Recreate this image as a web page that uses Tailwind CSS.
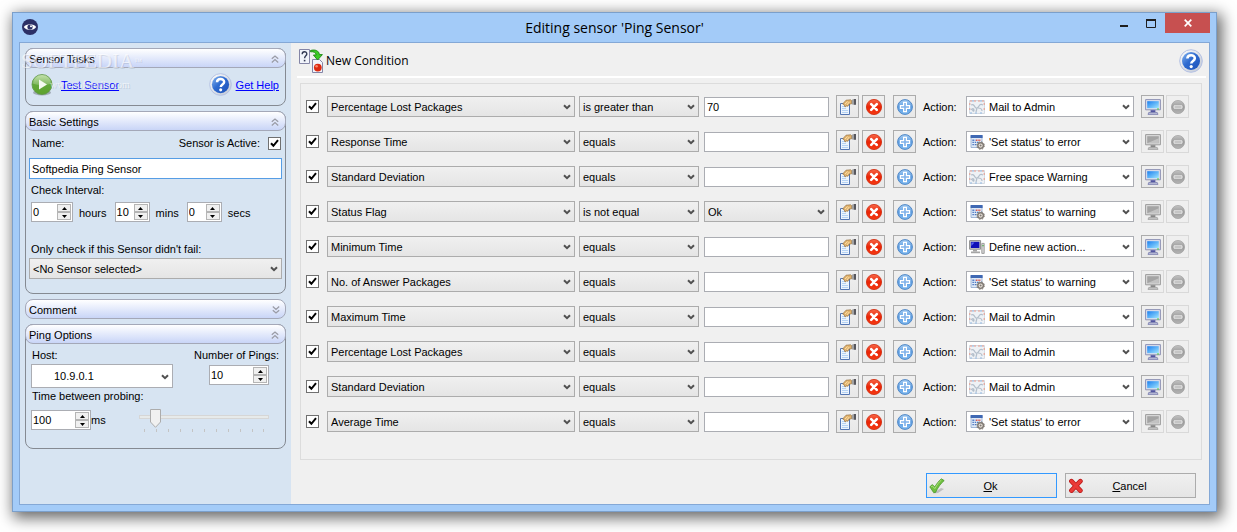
<!DOCTYPE html>
<html lang="en">
<head>
    <meta charset="UTF-8">
    <meta name="viewport" content="width=device-width, initial-scale=1.0">
    <title>Editing sensor 'Ping Sensor'</title>

    <script src="https://cdn.jsdelivr.net/npm/@tailwindcss/browser@4"></script>
</head>
<body class="flex min-h-screen bg-white pt-3 pr-5 pb-5 pl-3 font-['Liberation_Sans',Arial,sans-serif] text-[11px] leading-[14px] text-black">

    <!-- Icon sprite -->
    <svg class="absolute size-0" aria-hidden="true">
        <defs>
            <linearGradient id="gGreen" x1="0" y1="0" x2="0" y2="1"><stop offset="0" stop-color="#b9dd9b"/><stop offset=".5" stop-color="#62a83a"/><stop offset="1" stop-color="#5da22c"/></linearGradient>
            <linearGradient id="gBlue" x1="0" y1="0" x2="1" y2="1"><stop offset="0" stop-color="#8ab8f0"/><stop offset=".45" stop-color="#2f6bd0"/><stop offset="1" stop-color="#1c50b8"/></linearGradient>
            <linearGradient id="gAdd" x1="0" y1="0" x2="0" y2="1"><stop offset="0" stop-color="#a5cdf3"/><stop offset=".5" stop-color="#5f9fe4"/><stop offset="1" stop-color="#7cb8f0"/></linearGradient>
            <linearGradient id="gRed" x1="0" y1="0" x2="0" y2="1"><stop offset="0" stop-color="#f8694a"/><stop offset=".5" stop-color="#ea2405"/><stop offset="1" stop-color="#f53a14"/></linearGradient>
            <linearGradient id="gScreen" x1="0" y1="0" x2="1" y2="1"><stop offset="0" stop-color="#1c7ff0"/><stop offset="1" stop-color="#9fe6ff"/></linearGradient>
            <linearGradient id="gRing" x1="0" y1="0" x2="1" y2="1"><stop offset="0" stop-color="#ffffff"/><stop offset="1" stop-color="#bfc6d2"/></linearGradient>
            <linearGradient id="gMinus" x1="0" y1="0" x2="0" y2="1"><stop offset="0" stop-color="#c2c2c2"/><stop offset=".5" stop-color="#9b9b9b"/><stop offset="1" stop-color="#b4b4b4"/></linearGradient>
        </defs>

        <symbol id="check" viewBox="0 0 9 9"><path d="M1 4.2l2.4 2.6L8 1.2" fill="none" stroke="#000" stroke-width="2"/></symbol>
        <symbol id="arrow" viewBox="0 0 8 6"><path d="M1 1.2l3 3 3-3" fill="none" stroke="#505050" stroke-width="2"/></symbol>
        <symbol id="collapse" viewBox="0 0 8 8"><path d="M.8 3.8L4 1l3.2 2.8M.8 7.4L4 4.6l3.2 2.8" fill="none" stroke="#9a9ca6" stroke-width="1.3"/></symbol>

        <symbol id="eye" viewBox="0 0 16 16">
            <circle cx="8" cy="8" r="8" fill="#2b2f66"/>
            <path d="M1.8 8C4 4.2 12 4.2 14.2 8 12 11.8 4 11.8 1.8 8z" fill="#fff"/>
            <circle cx="8" cy="8" r="2.6" fill="#2b2f66"/><circle cx="9" cy="7.2" r="1" fill="#fff"/>
        </symbol>
        <symbol id="play" viewBox="0 0 22 22">
            <ellipse cx="11" cy="18.5" rx="9" ry="3" fill="#000" opacity=".25"/>
            <circle cx="11" cy="10.5" r="10" fill="url(#gGreen)" stroke="#5d9545" stroke-width=".8"/>
            <path d="M2 9.5a9 8.5 0 0 1 18 0c-5 2-13 2-18 0z" fill="#fff" opacity=".2"/>
            <path d="M8 5.5v10l8-5z" fill="#f4faf0"/>
        </symbol>
        <symbol id="help" viewBox="0 0 24 24">
            <circle cx="12" cy="12" r="11.3" fill="url(#gRing)" stroke="#b3c0e4" stroke-width="1"/>
            <circle cx="12" cy="12" r="9" fill="url(#gBlue)"/>
            <path d="M8.4 9.6C8.4 5.2 15.8 5.2 15.8 9.3c0 2.7-3.5 2.6-3.5 5.2" fill="none" stroke="#fff" stroke-width="2.6"/>
            <circle cx="12.2" cy="17.6" r="1.6" fill="#fff"/>
        </symbol>
        <symbol id="newcond" viewBox="0 0 24 24">
            <path d="M.5.5h10v14H.5z" fill="#f1f4fb" stroke="#8485a6"/>
            <path d="M3.200 5.200c0-3.200 4.600-3.200 4.600-.2 0 1.800-2.200 2-2.200 4.200" fill="none" stroke="#333b55" stroke-width="1.4"/>
            <path d="M4.800 10.800h1.600v1.600H4.800z" fill="#333b55"/>
            <path d="M13.500 10.500h7l3 3v10h-10z" fill="#f1f4fb" stroke="#8485a6"/>
            <circle cx="18.800" cy="18.600" r="3.900" fill="#dd2a10"/><circle cx="17.600" cy="17.200" r="1.300" fill="#f88a6c"/>
            <path d="M11.500 1.500C16 .2 20 1.600 20.400 5.600h3L18.600 11l-4.200-5h2.800c-.4-2.400-2.400-3.600-5.700-3.200z" fill="#3ccb25" stroke="#1c8511" stroke-width=".9"/>
        </symbol>
        <symbol id="props" viewBox="0 0 16 16">
            <path d="M.5 4.500h9v11H.5z" fill="#eef5fd" stroke="#5577b4"/>
            <path d="M2 7.500h3M2 9.500h4M2 11.500h6M2 13.500h6" stroke="#b4d2f4"/>
            <path d="M2.600 5L6 1.200 10.600.8l1 .8v3.200l-2.600.4-1 2-1.600-.2-1.400 1-.8-2.200z" fill="#e2b26c" stroke="#8a6534" stroke-width=".6"/>
            <path d="M5 5l2.600-2.400M7 6l2.200-3" stroke="#f9e2b0" stroke-width=".9"/>
            <path d="M12 .6h1.400v4.800H12z" fill="#a2a2a2"/><path d="M13.600 0H16v5.800h-2.400z" fill="#58585e"/>
        </symbol>
        <symbol id="delete" viewBox="0 0 16 16">
            <circle cx="8" cy="8" r="7.600" fill="url(#gRed)" stroke="#cf2609" stroke-width=".8"/>
            <path d="M5.200 5.200l5.600 5.600M10.800 5.200l-5.600 5.600" stroke="#fff" stroke-width="2.600" stroke-linecap="round"/>
        </symbol>
        <symbol id="add" viewBox="0 0 16 16">
            <circle cx="8" cy="8" r="7.400" fill="url(#gAdd)" stroke="#5288c6" stroke-width="1"/>
            <path d="M6.600 3.400h2.800v3.200h3.200v2.800H9.400v3.200H6.600V9.400H3.400V6.600h3.200z" fill="#7fb2ea" stroke="#fff" stroke-width="1.200"/>
        </symbol>
        <symbol id="monitor" viewBox="0 0 16 16">
            <path d="M.6.6h14.800v10.200H.6z" fill="#dfe2ee" stroke="#8e92b4"/>
            <path d="M2.200 2.200h11.600v7H2.200z" fill="url(#gScreen)"/>
            <path d="M12 9.400h2v1h-2z" fill="#4fcf3c"/>
            <path d="M5.600 11.200h4.800v2.200H5.600z" fill="#5054a0"/>
            <path d="M3.800 13.400h8.400l.8 2H3z" fill="#b9bcd8" stroke="#6c70a8" stroke-width=".7"/>
        </symbol>
        <symbol id="monitor-off" viewBox="0 0 16 16">
            <path d="M.6.6h14.800v10.200H.6z" fill="#dcdcdc" stroke="#9c9c9c"/>
            <path d="M2.200 2.200h11.600v7H2.200z" fill="#a4a4a4"/><path d="M2.200 9.200l11.600-5v5z" fill="#c2c2c2"/>
            <path d="M5.600 11.200h4.800v2.200H5.600z" fill="#858585"/>
            <path d="M3.800 13.400h8.400l.8 2H3z" fill="#c4c4c4" stroke="#989898" stroke-width=".7"/>
        </symbol>
        <symbol id="minus" viewBox="0 0 14 14">
            <circle cx="7" cy="7" r="6.600" fill="url(#gMinus)" stroke="#a0a0a0" stroke-width=".7"/>
            <path d="M3 5.800h8v2.400H3z" fill="#b5b5b5" stroke="#e9e9e9"/>
        </symbol>
        <symbol id="mail" viewBox="0 0 16 16">
            <path d="M.5 1.500h15v13H.5z" fill="#eef1f5" stroke="#d4dae2"/>
            <path d="M1 2h14" stroke="#e79a8c" stroke-dasharray="2 2"/><path d="M3 2h12" stroke="#93b9e2" stroke-dasharray="2 6"/>
            <path d="M1 14h14" stroke="#93b9e2" stroke-dasharray="2 3"/><path d="M.8 4v9M15.200 4v9" stroke="#e79a8c" stroke-dasharray="2 3"/>
            <path d="M2 6c2-1 3 0 4 2s3 1 4-1 2-2 4-1M2 11c1-2 3-2 3 0s-2 1-1-1M8 9l-1 4M9 9c2 0 4 1 4 3" fill="none" stroke="#b4bfcb" stroke-width="1.200"/>
        </symbol>
        <symbol id="calendar" viewBox="0 0 16 16">
            <path d="M2 1.500h11v12H2z" fill="#dfe9f7" stroke="#8ea6cd" stroke-width=".8"/>
            <path d="M1.600 1h12v3h-12z" fill="#3f68b4"/>
            <path d="M3.400 6.200h3M3.400 8.400h6M3.400 10.600h5" stroke="#4d79c1" stroke-width="1.400" stroke-dasharray="1.500 .8"/>
            <path d="M7 6.200h5" stroke="#df5a4c" stroke-width="1.400" stroke-dasharray="1.500 .8"/>
            <circle cx="11.600" cy="11.600" r="2.800" fill="#e8e2da" stroke="#807a74" stroke-width="1.400"/>
            <circle cx="11.600" cy="11.600" r="3.800" fill="none" stroke="#807a74" stroke-width="1" stroke-dasharray="1.500 1.500"/>
            <circle cx="11.600" cy="11.600" r="1" fill="#807a74"/>
        </symbol>
        <symbol id="computer" viewBox="0 0 16 16">
            <path d="M.6 1.600h11v8.600H.6z" fill="#cfcfcf" stroke="#8c8c8c"/>
            <path d="M1.800 2.800h8.600v6.200H1.800z" fill="#1010b8"/><path d="M2.400 3.400h3L2.400 7z" fill="#5a6bf0"/>
            <path d="M4 10.600h4v1.600H4zM2 12.400h9v1.800H2z" fill="#a5a5a5"/>
            <path d="M12.800 4.400h2.400v10h-2.400z" fill="#d8d8d8" stroke="#8c8c8c" stroke-width=".8"/><path d="M13.400 6h1.200v1.200h-1.200z" fill="#3cab3c"/>
        </symbol>
        <symbol id="ok" viewBox="0 0 16 16">
            <path d="M4 15.400l5-.4 6-4-3-1z" fill="#000" opacity=".18"/>
            <path d="M.8 8.800l2.600-2.200 2.400 2.400C7.600 5.800 9.800 2.800 12.400.8l2.800 1.800C11.600 5.600 8.800 9.600 6.600 14.400l-2 .2z" fill="#6fbf3f" stroke="#3f8f1f" stroke-width=".7"/>
            <path d="M2.200 8.800l1.200-.8 2.400 2.600C8 6.600 10 4 12.400 2" fill="none" stroke="#a9e07c" stroke-width="1"/>
        </symbol>
        <symbol id="cross" viewBox="0 0 16 16">
            <path d="M3 15h10l1.500-2H2z" fill="#000" opacity=".15"/>
            <path d="M3.400 3.200l9 9.400M12.400 3.200l-9 9.400" stroke="#b81414" stroke-width="4.600" stroke-linecap="round"/>
            <path d="M3.400 3.200l9 9.400M12.400 3.200l-9 9.400" stroke="#ea3a36" stroke-width="3.200" stroke-linecap="round"/>
        </symbol>
    </svg>

    <div class="flex flex-1 flex-col border border-[#7b9fca] bg-[#a3cbf8] px-[6px] pb-[6px] shadow-[3px_4px_14px_2px_rgba(0,0,0,0.6)]">

        <!-- Title bar -->
        <header class="grid h-[29px] grid-cols-[1fr_auto_1fr]">
            <svg class="mt-[6px] ml-[3px] size-4"><use href="#eye"/></svg>
            <h1 class="pt-[5px] font-['Open_Sans',sans-serif] text-[14px] leading-5">Editing sensor 'Ping Sensor'</h1>
            <div class="flex h-5 justify-end">
                <button aria-label="Minimize" class="grid w-[26px] place-items-center">
                    <svg class="h-[9px] w-[10px]"><path d="M1 6h8v2H1z" fill="#1e1e1e"/></svg>
                </button>
                <button aria-label="Maximize" class="grid w-[28px] place-items-center">
                    <svg class="h-[9px] w-[10px]"><path d="M.5 1h9v7.500h-9z" fill="none" stroke="#1e1e1e"/><path d="M0 0h10v2H0z" fill="#1e1e1e"/></svg>
                </button>
                <button aria-label="Close" class="grid w-[45px] place-items-center bg-[#c75050]">
                    <svg class="size-2"><path d="M.7.7l6.600 6.600M7.300.7L.7 7.300" stroke="#fff" stroke-width="1.700"/></svg>
                </button>
            </div>
        </header>

        <div class="flex flex-1 border border-[#84a8d6] bg-[#f0f0f0]">

            <!-- Sidebar -->
            <aside class="relative flex w-[271px] shrink-0 flex-col gap-[5px] bg-[#d7e4f2] px-[5px] pt-[5px]">
                <section class="h-[58px] rounded-lg border border-[#858a92]">
                    <h2 class="-mx-px -mt-px flex h-5 items-center justify-between rounded-lg border border-[#a4a8b8] bg-linear-to-b from-white to-[#c9d5f7] pt-px pr-[6px] pl-[3px]">Sensor Tasks
                        <button aria-label="Collapse"><svg class="size-2"><use href="#collapse"/></svg></button>
                    </h2>
                    <div class="flex items-center pt-[5px] pr-[6px] pl-[5px]">
                        <svg class="size-[22px]"><use href="#play"/></svg>
                        <a href="#" class="ml-2 text-[#0000ff] underline">Test Sensor</a>
                        <svg class="mr-1 ml-auto size-[23px]"><use href="#help"/></svg>
                        <a href="#" class="text-[#0000ff] underline">Get Help</a>
                    </div>
                </section>

                <section class="h-[183px] rounded-lg border border-[#858a92]">
                    <h2 class="-mx-px -mt-px flex h-5 items-center justify-between rounded-lg border border-[#a4a8b8] bg-linear-to-b from-white to-[#c9d5f7] pt-px pr-[6px] pl-[3px]">Basic Settings
                        <button aria-label="Collapse"><svg class="size-2"><use href="#collapse"/></svg></button>
                    </h2>
                    <div class="px-[3px] pt-[5px]">
                        <div class="flex items-center px-[3px] pr-px">
                            <label for="sensorName">Name:</label>
                            <label for="sensorActive" class="mr-2 ml-auto">Sensor is Active:</label>
                            <span class="grid size-[13px] place-items-center border border-[#707070] bg-white">
                                <input id="sensorActive" type="checkbox" checked class="peer col-start-1 row-start-1 size-[11px] appearance-none">
                                <svg class="pointer-events-none col-start-1 row-start-1 hidden size-[9px] peer-checked:block"><use href="#check"/></svg>
                            </span>
                        </div>
                        <input id="sensorName" type="text" value="Softpedia Ping Sensor" class="mt-2 block h-[21px] w-full border border-[#569de5] bg-white px-[2px]">
                        <p class="mt-1 pl-[2px]">Check Interval:</p>
                        <div class="mt-[5px] flex items-center pl-[2px]">
                            <span class="flex h-5 w-[42px] items-center border border-[#abadb3] bg-white pr-px">
                                <input id="hours" type="text" value="0" class="w-0 flex-1 pl-px">
                                <span class="spin"></span>
                            </span>
                            <label for="hours" class="mr-2 ml-[6px] pt-[2px]">hours</label>
                            <span class="flex h-5 w-[35px] items-center border border-[#abadb3] bg-white pr-px">
                                <input id="mins" type="text" value="10" class="w-0 flex-1 pl-px">
                                <span class="spin"></span>
                            </span>
                            <label for="mins" class="mr-2 ml-[6px] pt-[2px]">mins</label>
                            <span class="flex h-5 w-[35px] items-center border border-[#abadb3] bg-white pr-px">
                                <input id="secs" type="text" value="0" class="w-0 flex-1 pl-px">
                                <span class="spin"></span>
                            </span>
                            <label for="secs" class="ml-[6px] pt-[2px]">secs</label>
                        </div>
                        <label for="depends" class="mt-5 block pl-[2px]">Only check if this Sensor didn't fail:</label>
                        <div class="relative mt-[2px]">
                            <select id="depends" class="block h-[21px] w-full appearance-none border border-[#acacac] bg-linear-to-b from-[#f0f0f0] to-[#e5e5e5] pl-[3px]"><option>&lt;No Sensor selected&gt;</option></select>
                            <svg class="pointer-events-none absolute top-2 right-1 h-[6px] w-2"><use href="#arrow"/></svg>
                        </div>
                    </div>
                </section>

                <section>
                    <h2 class="flex h-5 items-center justify-between rounded-lg border border-[#a4a8b8] bg-linear-to-b from-white to-[#c9d5f7] pt-px pr-[5px] pl-[3px]">Comment
                        <button aria-label="Expand"><svg class="size-2 rotate-180"><use href="#collapse"/></svg></button>
                    </h2>
                </section>

                <section class="h-[125px] rounded-lg border border-[#858a92]">
                    <h2 class="-mx-px -mt-px flex h-5 items-center justify-between rounded-lg border border-[#a4a8b8] bg-linear-to-b from-white to-[#c9d5f7] pt-px pr-[6px] pl-[3px]">Ping Options
                        <button aria-label="Collapse"><svg class="size-2"><use href="#collapse"/></svg></button>
                    </h2>
                    <div class="px-[5px] pt-1">
                        <div class="flex justify-between px-px">
                            <label for="host">Host:</label>
                            <label for="pings">Number of Pings:</label>
                        </div>
                        <div class="mt-[2px] flex items-start justify-between pr-[11px]">
                            <span class="relative">
                                <select id="host" class="block h-6 w-[142px] appearance-none border border-[#abadb3] bg-white pl-[22px]"><option>10.9.0.1</option></select>
                                <svg class="pointer-events-none absolute top-[10px] right-1 h-[6px] w-2"><use href="#arrow"/></svg>
                            </span>
                            <span class="mt-px flex h-5 w-[60px] items-center border border-[#abadb3] bg-white pr-px">
                                <input id="pings" type="text" value="10" class="w-0 flex-1 pl-px">
                                <span class="spin"></span>
                            </span>
                        </div>
                        <label for="probing" class="mt-px block pl-px">Time between probing:</label>
                        <div class="mt-[7px] flex items-start pr-[11px]">
                            <span class="flex h-5 w-[60px] items-center border border-[#abadb3] bg-white pr-px">
                                <input id="probing" type="text" value="100" class="w-0 flex-1 pl-px">
                                <span class="spin"></span>
                            </span>
                            <span class="pt-[3px]">ms</span>
                            <div class="relative ml-auto w-[130px]">
                                <input type="range" min="0" max="1000" value="100" aria-label="Time between probing" class="mt-[5px] block h-1 w-full appearance-none border border-[#d6d6d6] bg-[#e7eaea] [&::-webkit-slider-thumb]:h-5 [&::-webkit-slider-thumb]:w-3 [&::-webkit-slider-thumb]:appearance-none [&::-webkit-slider-thumb]:opacity-0">
                                <svg class="pointer-events-none absolute -top-px left-[11px] h-[19px] w-[11px]"><path d="M.5.5h10v12.500L5.500 18.300.5 13z" fill="#f0f0f0" stroke="#acacac"/></svg>
                                <svg class="mt-[10px] h-[3px] w-full"><path d="M5.500 0v3M17.500 0v3M29.500 0v3M41.500 0v3M53.500 0v3M65.500 0v3M77.500 0v3M89.500 0v3M101.500 0v3M113.500 0v3M124.500 0v3" stroke="#c4c4c4"/></svg>
                            </div>
                        </div>
                    </div>
                </section>

                <!-- Watermark -->
                <div aria-hidden="true" class="pointer-events-none absolute top-[6px] left-px font-['Liberation_Serif',serif] text-white/60 [text-shadow:1px_1px_0_rgba(130,140,160,0.25)]">
                    <p class="text-[21px] leading-6">SOFTPEDIA<sup class="text-[8px]">™</sup></p>
                    <p class="pt-[5px] pl-[29px] text-[10px]">www.softpedia.com</p>
                </div>
            </aside>

            <!-- Conditions -->
            <main class="flex min-w-0 flex-1 flex-col">
                <div class="mr-[3px] ml-[6px] flex h-[35px] items-center justify-between border-b-2 border-white pt-[3px] pr-[3px] pl-[2px]">
                    <button class="flex items-center gap-[3px] font-['Open_Sans',sans-serif] text-[12px]">
                        <svg class="size-6"><use href="#newcond"/></svg>New Condition
                    </button>
                    <button aria-label="Help"><svg class="size-6"><use href="#help"/></svg></button>
                </div>

                <div id="conditions" class="mt-[5px] mr-[7px] ml-[9px] flex flex-1 flex-col gap-3 border border-[#dcdcdc] pt-[11px] pr-3 pl-[5px]"></div>

                <footer class="flex justify-end gap-2 pt-[13px] pr-[13px] pb-[6px]">
                    <button class="flex h-[25px] w-[131px] items-center border border-[#3399ff] bg-linear-to-b from-[#f0f0f0] to-[#e5e5e5] px-[2px]">
                        <svg class="size-4"><use href="#ok"/></svg><span class="flex-1 pr-[18px]"><u>O</u>k</span>
                    </button>
                    <button class="flex h-[25px] w-[131px] items-center border border-[#acacac] bg-linear-to-b from-[#f0f0f0] to-[#e5e5e5] px-[2px]">
                        <svg class="size-4"><use href="#cross"/></svg><span class="flex-1 pr-[18px]"><u>C</u>ancel</span>
                    </button>
                </footer>
            </main>
        </div>
    </div>

    <script>
        // [value, operator, operand, action icon, action]
        const conditions = [
            ['Percentage Lost Packages', 'is greater than', '70', 'mail', 'Mail to Admin'],
            ['Response Time', 'equals', '', 'calendar', "'Set status' to error"],
            ['Standard Deviation', 'equals', '', 'mail', 'Free space Warning'],
            ['Status Flag', 'is not equal', 'Ok', 'calendar', "'Set status' to warning"],
            ['Minimum Time', 'equals', '', 'computer', 'Define new action...'],
            ['No. of Answer Packages', 'equals', '', 'calendar', "'Set status' to warning"],
            ['Maximum Time', 'equals', '', 'mail', 'Mail to Admin'],
            ['Percentage Lost Packages', 'equals', '', 'mail', 'Mail to Admin'],
            ['Standard Deviation', 'equals', '', 'mail', 'Mail to Admin'],
            ['Average Time', 'equals', '', 'calendar', "'Set status' to error"],
        ];

        function createSelect(text, label) {
            return `
                <select aria-label="${label}" class="block h-[21px] w-full appearance-none border border-[#acacac] bg-linear-to-b from-[#f0f0f0] to-[#e5e5e5] pl-[3px]"><option>${text}</option></select>
                <svg class="pointer-events-none absolute top-2 right-1 h-[6px] w-2"><use href="#arrow"/></svg>`;
        }

        function createButton(icon, label) {
            return `<button aria-label="${label}" class="grid size-[23px] shrink-0 place-items-center border border-[#acacac] bg-linear-to-b from-[#f0f0f0] to-[#e8e8e8]"><svg class="size-4"><use href="#${icon}"/></svg></button>`;
        }

        function createRow([value, operator, operand, icon, action], i) {
            const editable = icon !== 'calendar';
            return `
                <div class="flex h-[23px] items-center">
                    <span class="grid size-[13px] shrink-0 place-items-center border border-[#707070] bg-white">
                        <input type="checkbox" checked aria-label="${value}" class="peer col-start-1 row-start-1 size-[11px] appearance-none">
                        <svg class="pointer-events-none col-start-1 row-start-1 hidden size-[9px] peer-checked:block"><use href="#check"/></svg>
                    </span>
                    <div class="relative ml-2 min-w-0 flex-1">${createSelect(value, 'Value')}</div>
                    <div class="relative ml-1 w-[120px]">${createSelect(operator, 'Operator')}</div>
                    <div class="relative ml-[5px] w-[125px]">${operand === 'Ok'
                        ? createSelect(operand, 'Operand')
                        : `<input type="text" aria-label="Operand" value="${operand}" class="block h-5 w-full border border-[#abadb3] bg-white px-[2px]">`}</div>
                    <div class="ml-[7px] flex gap-[3px]">
                        ${createButton('props', 'Properties')}
                        ${createButton('delete', 'Delete')}
                    </div>
                    <div class="ml-2">${createButton('add', 'Add action')}</div>
                    <label for="action${i}" class="ml-[7px] w-[43px]">Action:</label>
                    <div class="relative w-[168px]">
                        <select id="action${i}" class="block h-[21px] w-full appearance-none border border-[#abadb3] bg-white pl-[22px]"><option>${action}</option></select>
                        <svg class="pointer-events-none absolute top-[3px] left-[3px] size-4"><use href="#${icon}"/></svg>
                        <svg class="pointer-events-none absolute top-2 right-1 h-[6px] w-2"><use href="#arrow"/></svg>
                    </div>
                    <div class="ml-[7px] flex gap-[2px]">
                        ${editable
                            ? createButton('monitor', 'Edit action')
                            : '<button disabled aria-label="Edit action" class="grid size-[23px] place-items-center border border-[#d9d9d9] bg-[#efefef]"><svg class="size-4"><use href="#monitor-off"/></svg></button>'}
                        <button disabled aria-label="Remove action" class="grid size-[23px] place-items-center border border-[#d9d9d9] bg-[#efefef]"><svg class="size-[14px]"><use href="#minus"/></svg></button>
                    </div>
                </div>`;
        }

        document.getElementById('conditions').innerHTML = conditions.map(createRow).join('');

        // Up/down buttons of the number fields
        document.querySelectorAll('.spin').forEach(spin => {
            spin.innerHTML = `
                <span class="flex w-[14px] flex-col">
                    <button aria-label="Increase" class="grid h-2 place-items-center border border-[#b5b5b5] bg-[#f0f0f0]"><svg class="h-[3px] w-[5px]"><path d="M0 3L2.500 0 5 3z"/></svg></button>
                    <button aria-label="Decrease" class="grid h-2 place-items-center border border-[#b5b5b5] bg-[#f0f0f0]"><svg class="h-[3px] w-[5px]"><path d="M0 0l2.500 3L5 0z"/></svg></button>
                </span>`;
        });
    </script>
</body>
</html>
